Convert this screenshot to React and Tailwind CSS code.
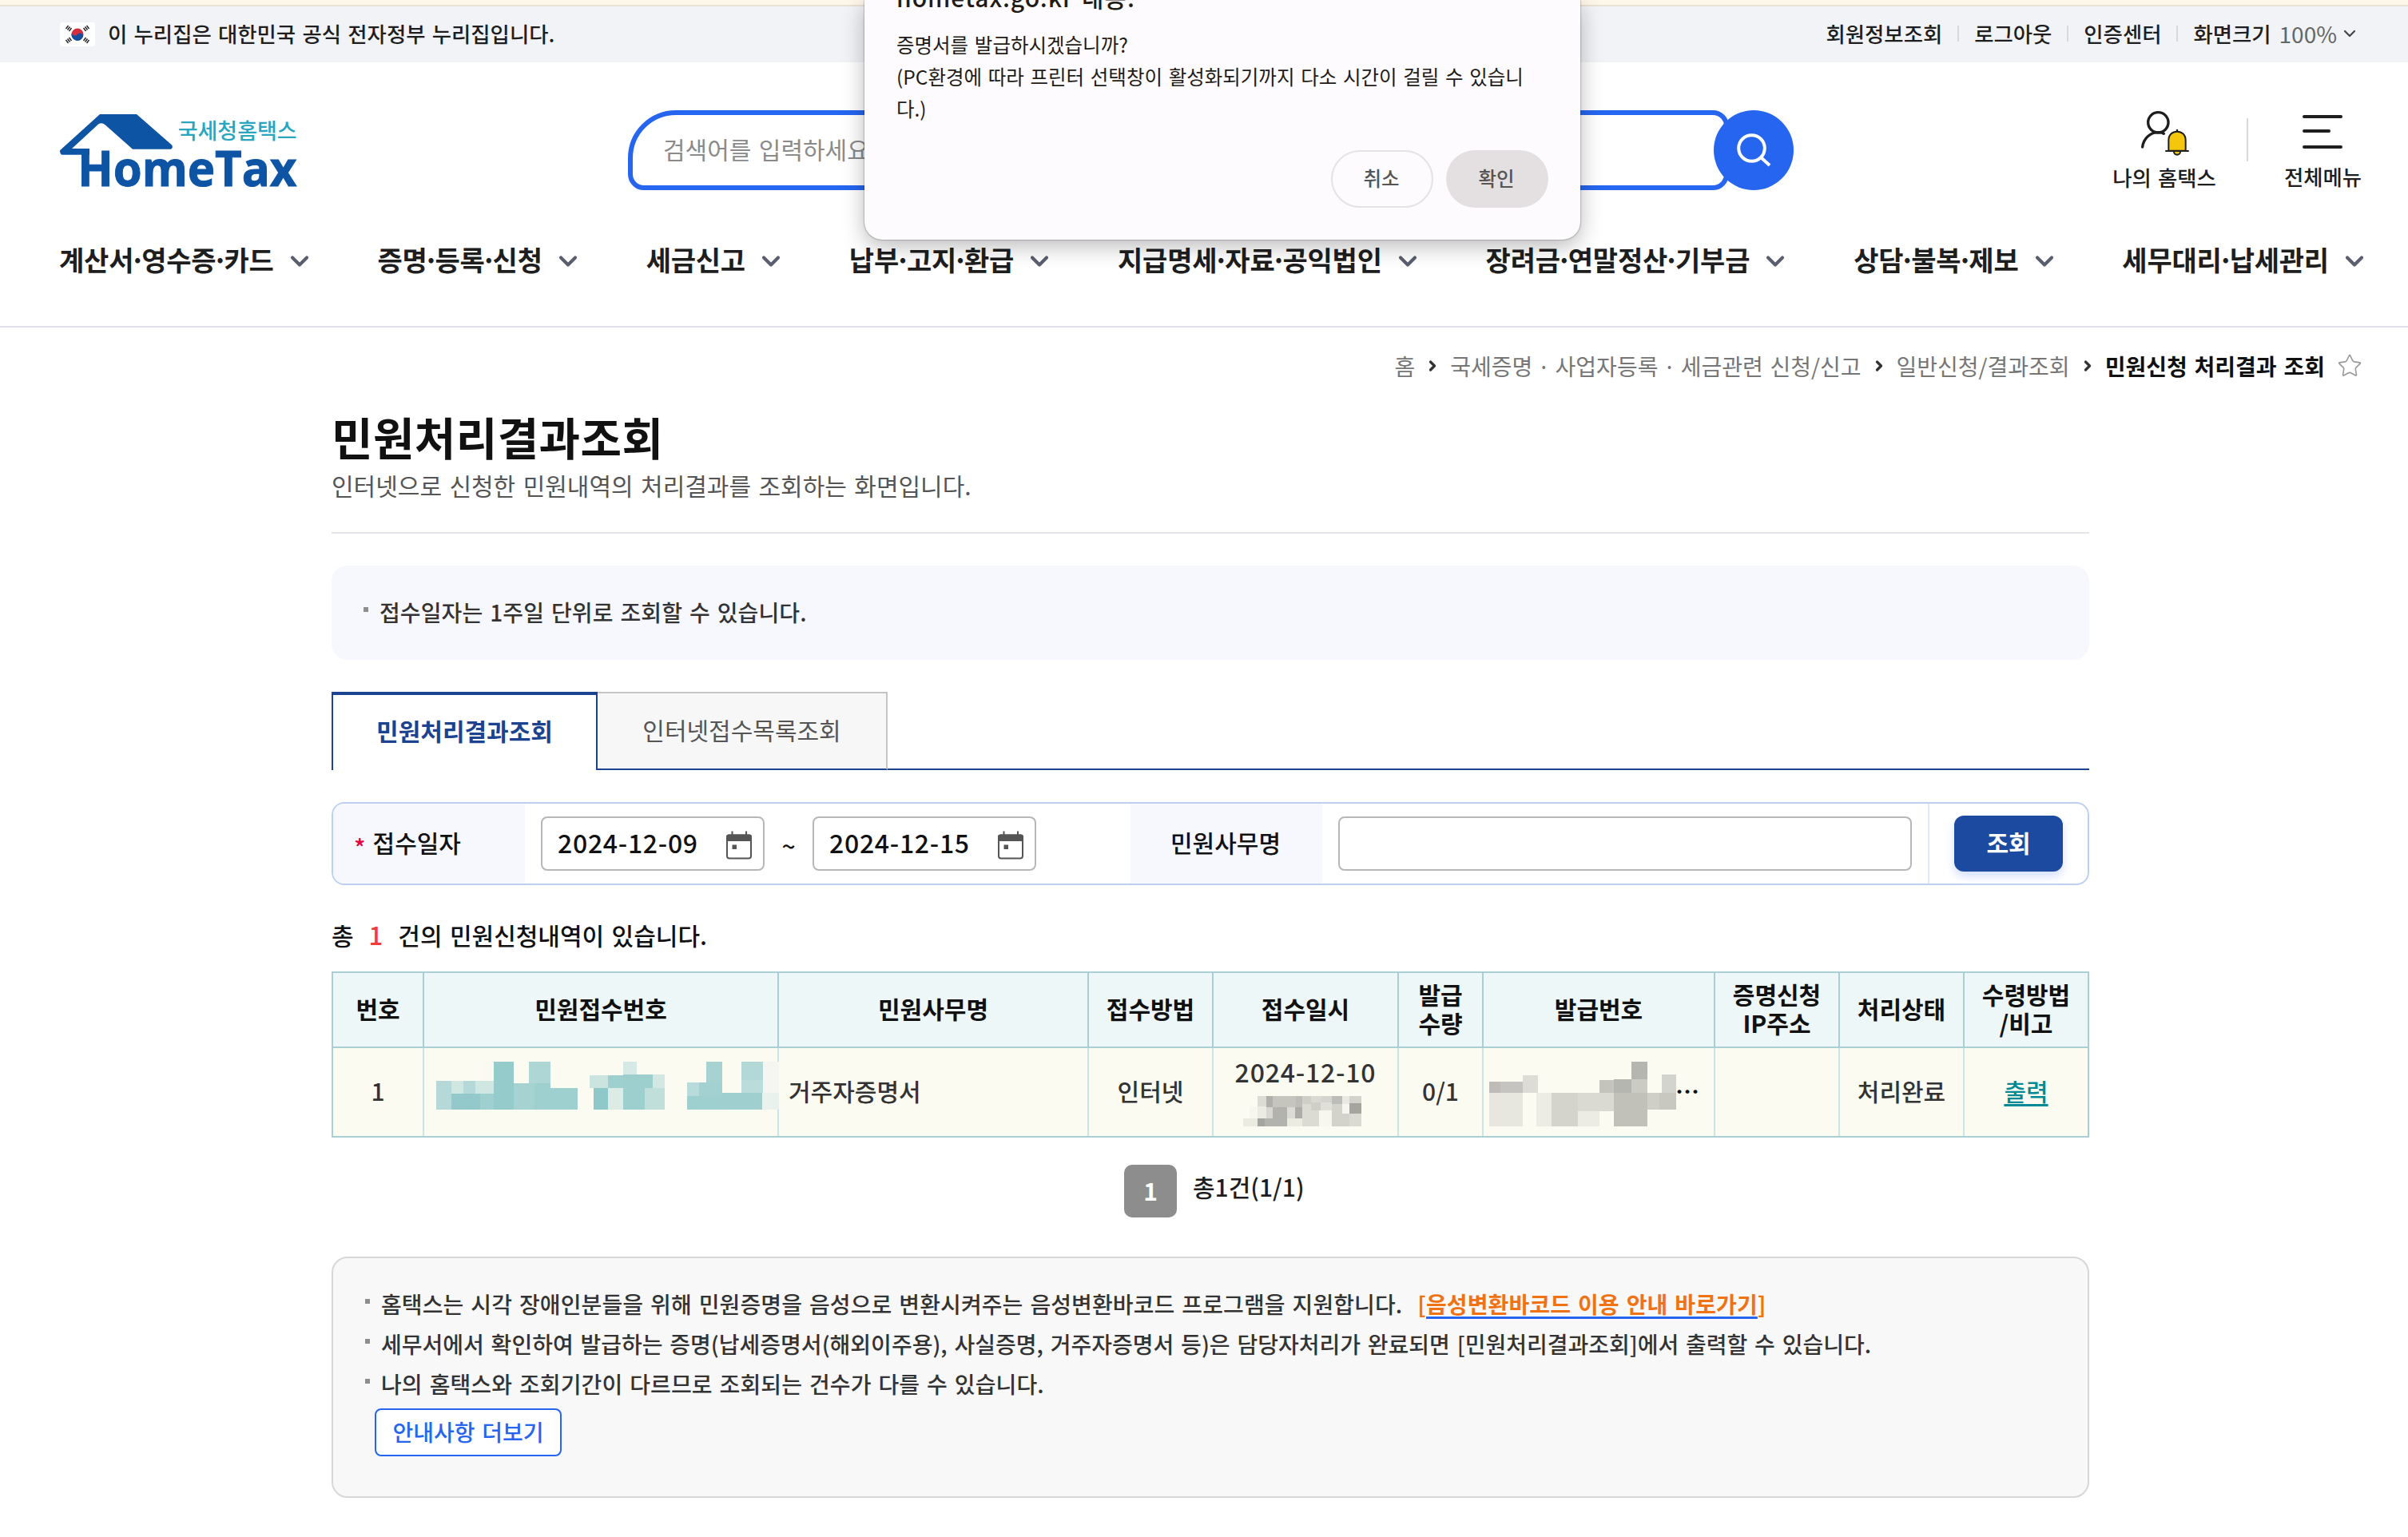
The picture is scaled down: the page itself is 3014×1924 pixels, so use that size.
import { Fragment } from 'react';
import { ChevronDown, ChevronRight, Star } from 'lucide-react';

const NAV_ITEMS = [
  '계산서·영수증·카드',
  '증명·등록·신청',
  '세금신고',
  '납부·고지·환급',
  '지급명세·자료·공익법인',
  '장려금·연말정산·기부금',
  '상담·불복·제보',
  '세무대리·납세관리',
];

const COLUMNS = [
  ['번호'],
  ['민원접수번호'],
  ['민원사무명'],
  ['접수방법'],
  ['접수일시'],
  ['발급', '수량'],
  ['발급번호'],
  ['증명신청', 'IP주소'],
  ['처리상태'],
  ['수령방법', '/비고'],
];

// Masked values: [x, y, width, height, color]
const RECEIPT_MASK = [
  [229, 1119, 30, 108, '#b5d9d8'], [259, 1119, 23, 48, '#cfe6e1'], [282, 1119, 24, 48, '#b5d9d8'],
  [306, 1119, 36, 48, '#cfe6e1'], [259, 1167, 56, 60, '#93c9ca'], [315, 1167, 27, 60, '#9fd0cf'],
  [342, 1047, 39, 180, '#95cbcb'], [411, 1047, 42, 82, '#aed6d5'], [381, 1128, 41, 99, '#a6d3d2'],
  [422, 1128, 31, 99, '#9fd0d0'], [453, 1146, 53, 81, '#9fd0d0'], [320, 1047, 22, 72, '#faf9f2'],
  [530, 1098, 36, 48, '#cce4e0'], [566, 1098, 30, 48, '#9fd0d0'], [596, 1047, 26, 48, '#d7e9e6'],
  [596, 1095, 58, 51, '#9ccfcd'], [654, 1095, 23, 51, '#d3e8e3'], [538, 1146, 28, 81, '#8fc8c8'],
  [566, 1146, 30, 81, '#dcebe5'], [596, 1146, 42, 81, '#9ccfcd'], [638, 1146, 39, 81, '#c0dfda'],
  [721, 1125, 24, 51, '#b8dbdb'], [745, 1125, 45, 51, '#a3d1d1'], [759, 1047, 31, 78, '#a6d3d2'],
  [721, 1176, 69, 51, '#9fd0d0'], [790, 1164, 79, 63, '#9fd0cf'], [828, 1047, 42, 69, '#b3d8d8'],
  [828, 1116, 42, 48, '#badcdb'], [870, 1047, 32, 117, '#f5f6f1'], [869, 1164, 33, 63, '#eaf2ed'],
];

const TIME_MASK = [
  [86, 192, 29, 39, '#dcdcd5'], [115, 192, 21, 42, '#b1b1ab'], [136, 192, 75, 42, '#c5c5be'],
  [211, 192, 22, 42, '#bdbdb7'], [233, 192, 28, 30, '#cfcfc8'], [261, 192, 33, 24, '#dadad3'],
  [294, 192, 35, 24, '#d5d5cf'], [329, 192, 34, 30, '#bcbcb8'], [363, 192, 24, 30, '#e9e9e2'],
  [387, 192, 39, 27, '#d3d3cc'], [60, 231, 26, 45, '#f7f7f0'], [86, 231, 29, 45, '#ebebe3'],
  [115, 234, 21, 42, '#d8d8d1'], [136, 234, 47, 72, '#b3b3ad'], [183, 234, 26, 42, '#dcdcd5'],
  [209, 234, 24, 42, '#adada8'], [233, 222, 28, 84, '#dbdbd4'], [261, 216, 32, 30, '#cfcfc7'],
  [261, 246, 26, 60, '#dbdbd4'], [293, 216, 36, 30, '#e0e0d9'], [287, 246, 42, 60, '#f7f7f0'],
  [329, 222, 34, 84, '#d3d3cc'], [363, 222, 24, 36, '#f6f6ef'], [387, 219, 39, 39, '#a5a5a0'],
  [363, 258, 24, 48, '#d3d3cc'], [387, 258, 39, 48, '#dadad3'], [39, 276, 47, 30, '#ebebe2'],
  [86, 276, 24, 30, '#a6a6a1'], [110, 276, 26, 30, '#b3b3ad'], [183, 276, 50, 30, '#ebebe2'],
];

const ISSUE_MASK = [
  [847, 132, 36, 42, '#bdbcb8'], [883, 132, 73, 42, '#c5c4c0'], [956, 108, 50, 66, '#ddddd6'],
  [847, 174, 109, 126, '#e7e7e0'], [1001, 174, 50, 126, '#ecece5'], [1051, 174, 86, 126, '#d4d4cd'],
  [1137, 174, 117, 69, '#dadad3'], [1137, 243, 70, 57, '#ecece5'], [1207, 126, 47, 48, '#c4c4bd'],
  [1254, 123, 58, 51, '#b6b6b1'], [1312, 57, 52, 66, '#b6b6b1'], [1312, 123, 52, 51, '#cbcbc4'],
  [1254, 174, 110, 126, '#c1c1ba'], [1411, 105, 47, 69, '#d4d4ce'], [1364, 174, 39, 63, '#cfcfc8'],
  [1403, 174, 55, 63, '#c8c8c1'],
];

const Mask = ({ cells, viewBox, className }) => (
  <svg viewBox={viewBox} preserveAspectRatio="none" shapeRendering="crispEdges" className={className} aria-hidden="true">
    {cells.map(([x, y, w, h, fill]) => (
      <rect key={`${x}-${y}`} x={x} y={y} width={w} height={h} fill={fill} />
    ))}
  </svg>
);

// The middle dot is set tighter than the font's own advance
const Dotted = ({ text, dotClass }) => (
  <span>
    {text.split('·').map((part, i) => (
      <Fragment key={part}>
        {i > 0 && <span className={dotClass}>·</span>}
        {part}
      </Fragment>
    ))}
  </span>
);

const FlagIcon = () => (
  <svg viewBox="0 0 44 30" className="h-[30px] w-11">
    <rect width="44" height="30" rx="3" fill="#fff" />
    <circle cx="22" cy="15" r="7.5" fill="#d3303f" />
    <path d="M14.8 13 A7.5 7.5 0 1 0 29.3 16.5 C28 12.5 24 13 22 15 C19.5 17.5 15.5 17 14.8 13Z" fill="#174ea0" />
    <g stroke="#222" strokeWidth="1.4">
      <path d="M7.5 8 L10.5 4 M9.5 9.5 L12.5 5.5 M11.5 11 L14.5 7" />
      <path d="M36.5 8 L33.5 4 M34.5 9.5 L31.5 5.5 M32.5 11 L29.5 7" />
      <path d="M7.5 22 L10.5 26 M9.5 20.5 L12.5 24.5 M11.5 19 L14.5 23" />
      <path d="M36.5 22 L33.5 26 M34.5 20.5 L31.5 24.5 M32.5 19 L29.5 23" />
    </g>
  </svg>
);

const Logo = () => (
  <svg viewBox="45 369 888 270" className="h-[90px] w-[296px] overflow-visible">
    <path
      d="M195 369 H333 L466 485 Q471 496 461 500 H318 L214 408 Q202 398 190 406 L90 498 H156 V521 H52 Q45 519 45 505 Z"
      fill="#0d54a5"
    />
    <text x="488" y="463" textLength="447" lengthAdjust="spacingAndGlyphs" fontSize="82" fontWeight="500" fill="#2aa5c0" className="font-['Noto_Sans_CJK_KR',sans-serif]">
      국세청홈택스
    </text>
    <text x="112" y="638" textLength="822" lengthAdjust="spacingAndGlyphs" fontSize="183" fontWeight="700" fill="#0d54a5" stroke="#0d54a5" strokeWidth="3" className="font-['Open_Sans',sans-serif]">
      HomeTax
    </text>
  </svg>
);

const SearchIcon = () => (
  <svg viewBox="0 0 43 42" className="h-[42px] w-[43px]" fill="none" stroke="#fff" strokeWidth="4">
    <circle cx="18.5" cy="18.5" r="16.3" />
    <path d="M30 30 L41 40" />
  </svg>
);

const MyIcon = () => (
  <svg viewBox="240 57 180 168" className="ml-0.5 h-14 w-[60px]" fill="none" stroke="#1e1e1e" strokeLinecap="round">
    <circle cx="304" cy="100" r="38" strokeWidth="10" />
    <path d="M245 192 C249 157 277 137 304 137 Q318 137 325 142" strokeWidth="10" />
    <path d="M375 129 V134" strokeWidth="7" />
    <path d="M343 206 V167 C343 146 357 134 375 134 C393 134 407 146 407 167 V206 Z" fill="#f4c60c" strokeWidth="6" />
    <path d="M363 209 A12 12 0 0 0 387 209" fill="#f4c60c" strokeWidth="6" />
    <path d="M333 207 H417" strokeWidth="6" />
  </svg>
);

const MenuIcon = () => (
  <svg viewBox="0 0 50 42" className="h-[42px] w-[50px]" stroke="#1e1e1e" strokeWidth="4" strokeLinecap="round">
    <path d="M2 2 H48 M2 20 H33 M2 40 H48" />
  </svg>
);

const CalendarIcon = () => (
  <svg viewBox="0 0 32 36" className="mt-1 h-9 w-8" fill="none" stroke="#555">
    <path d="M7.5 0.5 V6 M25 0.5 V6" strokeWidth="2" />
    <rect x="1" y="5.5" width="30" height="29" rx="3" strokeWidth="2" />
    <path d="M0 13 V7 Q0 4.5 3 4.5 H29 Q32 4.5 32 7 V13 Z" fill="#555" stroke="none" />
    <rect x="7.5" y="17.5" width="5.5" height="5.5" fill="#555" stroke="none" />
  </svg>
);

const DateField = ({ value }) => (
  <div className="flex h-[68px] w-[280px] items-center justify-between rounded-lg border-2 border-[#b7b7b7] bg-white pr-3.5 pl-[19px]">
    <span className="pb-[5px] text-[32px] font-medium tracking-[0.7px] text-[#111]">{value}</span>
    <CalendarIcon />
  </div>
);

const TopBar = () => (
  <div className="flex h-[70px] items-center justify-between bg-[#f1f3f7] pr-[61px] pl-[75px] text-[26.4px] font-medium text-[#1e1e1e]">
    <div className="flex items-center gap-4">
      <FlagIcon />
      <span className="pb-[3px]">이 누리집은 대한민국 공식 전자정부 누리집입니다.</span>
    </div>
    <div className="flex items-center gap-[19px] pb-[3px]">
      <span>회원정보조회</span>
      <i className="h-5 w-0.5 bg-[#d6d9de]" />
      <span>로그아웃</span>
      <i className="h-5 w-0.5 bg-[#d6d9de]" />
      <span>인증센터</span>
      <i className="h-5 w-0.5 bg-[#d6d9de]" />
      <span className="flex items-center">
        화면크기
        <span className="ml-2.5 text-[28px] font-normal text-[#666]">100%</span>
        <ChevronDown className="ml-1 size-6 text-[#444]" strokeWidth={2.2} />
      </span>
    </div>
  </div>
);

const Header = () => (
  <header className="border-b-2 border-[#e1e1e7] pt-[60px]">
    <div className="flex h-[100px] items-center pr-[58px] pl-[75px]">
      <Logo />
      <div className="ml-[415px] flex h-[100px] w-[1459px]">
        <div className="flex w-[1378px] items-center rounded-[20px] rounded-tl-[60px] border-[6px] border-[#2565ef] pb-1 pl-[38px] text-[30px] text-[#8a8a8a]">
          검색어를 입력하세요
        </div>
        <button className="relative -ml-[19px] flex size-[100px] items-center justify-center rounded-full bg-[#2565ef]" aria-label="검색">
          <SearchIcon />
        </button>
      </div>
      <div className="ml-auto flex h-[100px] items-center text-[26.4px] leading-8 font-medium text-[#1e1e1e]">
        <div className="flex flex-col items-center gap-[11px]">
          <MyIcon />
          <span>나의 홈택스</span>
        </div>
        <i className="mr-[45px] mb-[26px] ml-[38px] h-[54px] w-0.5 bg-[#d6d9de]" />
        <div className="flex flex-col items-center gap-[19px] pt-1">
          <MenuIcon />
          <span>전체메뉴</span>
        </div>
      </div>
    </div>
    <nav className="mt-[52px] mb-[46px] flex h-[72px] items-center justify-between pr-[49px] pl-[74px]">
      {NAV_ITEMS.map((item) => (
        <a key={item} className="flex items-center gap-3.5 pb-[3px] text-[34px] font-bold tracking-[-0.2px] text-[#1e1e1e]">
          <Dotted text={item} dotClass="-mx-[5px]" />
          <ChevronDown className="mt-1 size-9 text-[#5a5f70]" strokeWidth={2.8} />
        </a>
      ))}
    </nav>
  </header>
);

const Crumb = () => <ChevronRight className="mx-3 size-5 text-[#333]" strokeWidth={4} />;

const Breadcrumb = () => (
  <div className="flex h-10 items-center justify-end pr-[57px] pb-px text-[28px] text-[#767676]">
    <span>홈</span>
    <Crumb />
    <Dotted text="국세증명 · 사업자등록 · 세금관련 신청/신고" dotClass="-mx-[2.5px]" />
    <Crumb />
    <span>일반신청/결과조회</span>
    <Crumb />
    <span className="font-bold text-[#111]">민원신청 처리결과 조회</span>
    <Star className="ml-[15px] size-8 text-[#999]" strokeWidth={1.2} />
  </div>
);

const SearchForm = () => (
  <div className="mt-10 flex h-[104px] overflow-hidden rounded-2xl border-2 border-[#bcd0f0] text-[30px] font-medium text-[#111]">
    <div className="flex w-60 items-center bg-[#f7f8fe] pb-1 pl-[26px]">
      <span className="mt-3 mr-[9px] text-[#e6003c]">*</span>
      접수일자
    </div>
    <div className="flex w-[758px] items-center pl-5">
      <DateField value="2024-12-09" />
      <span className="w-[60px] pt-1 text-center">~</span>
      <DateField value="2024-12-15" />
    </div>
    <div className="flex w-60 items-center justify-center bg-[#f7f8fe] pr-0.5 pb-1">민원사무명</div>
    <div className="flex items-center px-5">
      <input className="h-[68px] w-[718px] rounded-lg border-2 border-[#b7b7b7]" aria-label="민원사무명" />
    </div>
    <div className="flex flex-1 items-center border-l-2 border-[#e1e9f8] pl-[31px]">
      <button className="h-[70px] w-[136px] rounded-xl bg-[#1b4aa0] pb-1 font-bold text-white shadow-[0_6px_12px_#d5e0ff]">조회</button>
    </div>
  </div>
);

const Cell = ({ className = '', children }) => (
  <div className={`flex items-center justify-center border-r-2 border-[#c8e5e8] pb-[3px] last:border-r-0 ${className}`}>{children}</div>
);

const ResultTable = () => (
  <div className="mt-[25px] border-2 border-[#a9cfd3] text-[30px]">
    <div className="grid h-[94px] grid-cols-[114px_444px_388px_156px_232px_106px_290px_156px_156px_154px] border-b-2 border-[#a9cfd3] bg-[#edf7f7] font-bold text-[#111]">
      {COLUMNS.map((lines) => (
        <div key={lines[0]} className="flex flex-col items-center justify-center border-r-2 border-[#a9cfd3] pb-1 leading-9 last:border-r-0">
          {lines.map((line) => (
            <span key={line}>{line}</span>
          ))}
        </div>
      ))}
    </div>
    <div className="grid h-[110px] grid-cols-[114px_444px_388px_156px_232px_106px_290px_156px_156px_154px] bg-[#fbfbf2] font-medium text-[#333]">
      <Cell>1</Cell>
      <Cell className="relative z-10">
        <Mask cells={RECEIPT_MASK} viewBox="229 1047 673 180" className="mb-[13px] -mr-4 h-[60px] w-[429px] shrink-0" />
      </Cell>
      <Cell className="!justify-start pl-3">거주자증명서</Cell>
      <Cell>인터넷</Cell>
      <Cell className="flex-col gap-[11px]">
        <span className="text-[32px] leading-10 tracking-[0.8px]">2024-12-10</span>
        <Mask cells={TIME_MASK} viewBox="39 192 387 114" className="mr-2 h-[38px] w-[148px]" />
      </Cell>
      <Cell>0/1</Cell>
      <Cell className="!justify-start pl-[7px]">
        <Mask cells={ISSUE_MASK} viewBox="847 57 613 243" className="mt-2 h-[81px] w-[235px]" />
        <span className="-ml-0.5 font-bold text-[#111]">…</span>
      </Cell>
      <Cell />
      <Cell>처리완료</Cell>
      <Cell>
        <a className="text-[#008a96] underline decoration-[3px] underline-offset-4">출력</a>
      </Cell>
    </div>
  </div>
);

const NoticeItem = ({ children }) => (
  <li className="flex h-[50px] items-center">
    <i className="mr-3.5 mb-[7px] size-1.5 bg-[#8e8e8e]" />
    <span>{children}</span>
  </li>
);

const Notice = () => (
  <div className="mt-[49px] h-[302px] rounded-[20px] border-2 border-[#d7d7d7] bg-[#f8f8f8] pt-8 pl-10 text-[28px] font-medium text-[#333]">
    <ul>
      <NoticeItem>
        <span className="tracking-[0.1px]">
          홈택스는 시각 장애인분들을 위해 민원증명을 음성으로 변환시켜주는 음성변환바코드 프로그램을 지원합니다.
        </span>
        <a className="ml-[19px] font-bold tracking-[0.1px] text-[#f07212]">
          [<span className="underline decoration-[#2565ef] decoration-[3px] underline-offset-4">음성변환바코드 이용 안내 바로가기</span>]
        </a>
      </NoticeItem>
      <NoticeItem>
        세무서에서 확인하여 발급하는 증명(납세증명서(해외이주용), 사실증명, 거주자증명서 등)은 담당자처리가 완료되면 [민원처리결과조회]에서 출력할 수 있습니다.
      </NoticeItem>
      <NoticeItem>
        <span className="tracking-[0.1px]">나의 홈택스와 조회기간이 다르므로 조회되는 건수가 다를 수 있습니다.</span>
      </NoticeItem>
    </ul>
    <button className="mt-1.5 ml-3 flex h-[60px] w-[234px] items-center justify-center rounded-lg border-2 border-[#2565ef] bg-white pb-[3px] text-[#2565ef]">
      안내사항 더보기
    </button>
  </div>
);

const ConfirmDialog = () => (
  <div className="absolute top-0 left-[1082px] h-[300px] w-[896px] rounded-b-[22px] bg-[#fefbff] px-10 text-[24.5px] leading-10 text-[#1f1b16] shadow-[0_0_2px_rgba(0,0,0,0.6),0_8px_28px_rgba(0,0,0,0.28)]">
    <div className="h-9 overflow-hidden">
      <p className="-mt-6 text-[30px] font-medium tracking-[1px]">hometax.go.kr 내용:</p>
    </div>
    <p>증명서를 발급하시겠습니까?</p>
    <p>
      (PC환경에 따라 프린터 선택창이 활성화되기까지 다소 시간이 걸릴 수 있습니
      <br />
      다.)
    </p>
    <div className="mt-8 flex justify-end gap-4 font-medium text-[#555]">
      <button className="h-[72px] w-32 rounded-full border-2 border-[#e6e1e6] pr-0.5 pb-0.5">취소</button>
      <button className="h-[72px] w-32 rounded-full bg-[#e4e0e1] pr-0.5 pb-0.5">확인</button>
    </div>
  </div>
);

export default function App() {
  return (
    <div className="relative h-[1924px] w-[3014px] overflow-hidden bg-white font-['Noto_Sans_CJK_KR',sans-serif] **:[word-spacing:0.09em]">
      <div className="h-2 border-b-2 border-[#e8e2d2] bg-[#fff6ea]" />
      <TopBar />
      <Header />
      <div className="pt-7">
        <Breadcrumb />
      </div>

      <main className="ml-[415px] w-[2200px]">
        <div className="border-b-2 border-[#e4e5ea] pt-[30px] pb-9">
          <h1 className="text-[56px] leading-[76px] font-bold tracking-[0.4px] text-[#111]">민원처리결과조회</h1>
          <p className="pt-px text-[30px] leading-[45px] text-[#555]">인터넷으로 신청한 민원내역의 처리결과를 조회하는 화면입니다.</p>
        </div>

        <div className="mt-10 flex h-[118px] items-center rounded-[20px] bg-[#f7f8fe] pb-0.5 pl-10 text-[28px] font-medium text-[#333]">
          <i className="mr-3.5 mb-[7px] size-1.5 bg-[#8e8e8e]" />
          <span className="tracking-[0.1px]">접수일자는 1주일 단위로 조회할 수 있습니다.</span>
        </div>

        <div className="mt-10 flex h-[98px] text-[30px]">
          <div className="flex w-[333px] items-center justify-center border-x-2 border-t-4 border-[#1b4390] pb-1.5 font-bold text-[#1b4390]">
            민원처리결과조회
          </div>
          <div className="flex w-[363px] items-center justify-center border-t-2 border-r-2 border-b-2 border-[#c5c5c5] border-b-[#1b4390] bg-[#f7f7f7] pb-[3px] text-[#555]">
            인터넷접수목록조회
          </div>
          <div className="flex-1 border-b-2 border-[#1b4390]" />
        </div>

        <SearchForm />

        <p className="mt-[41px] text-[30px] leading-[41px] font-medium text-[#111]">
          총<span className="mx-[19px] text-[31px] text-[#f33a3a]">1</span>건의 민원신청내역이 있습니다.
        </p>

        <ResultTable />

        <div className="mt-[34px] ml-[992px] flex h-[66px] items-center gap-5 text-[30px] font-medium text-[#1e1e1e]">
          <span className="flex size-[66px] items-center justify-center rounded-[10px] bg-[#8d8d8d] pb-0.5 font-bold text-white">1</span>
          <span className="mb-3">총1건(1/1)</span>
        </div>

        <Notice />
      </main>

      <ConfirmDialog />
    </div>
  );
}
